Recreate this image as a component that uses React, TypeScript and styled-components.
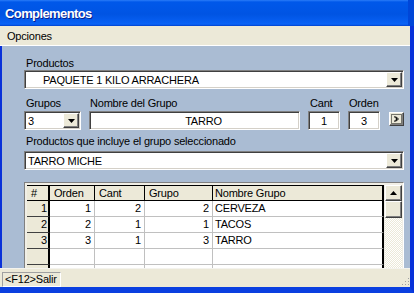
import { FC } from 'react';
import styled, { createGlobalStyle, css } from 'styled-components';

interface IRow {
  id: number;
  orden: number;
  cant: number;
  grupo: number;
  nombre: string;
}

const rows: IRow[] = [
  { id: 1, orden: 1, cant: 2, grupo: 2, nombre: 'CERVEZA' },
  { id: 2, orden: 2, cant: 1, grupo: 1, nombre: 'TACOS' },
  { id: 3, orden: 3, cant: 1, grupo: 3, nombre: 'TARRO' },
];

const headers = ['#', 'Orden', 'Cant', 'Grupo', 'Nombre Grupo'];

const DownArrow: FC = () => (
  <svg width="7" height="4" viewBox="0 0 7 4">
    <path d="M0 0h7L3.5 4z" fill="#000" />
  </svg>
);

const UpArrow: FC = () => (
  <svg width="7" height="4" viewBox="0 0 7 4">
    <path d="M0 4h7L3.5 0z" fill="#000" />
  </svg>
);

const Combo: FC<{ value: string; indent?: number; top?: number }> = ({ value, indent = 0, top = 0 }) => (
  <ComboBox $top={top}>
    <ComboText $indent={indent}>{value}</ComboText>
    <DropButton>
      <DownArrow />
    </DropButton>
  </ComboBox>
);

const App: FC = () => {
  return (
    <Window>
      <GlobalStyle />
      <TitleBar>Complementos</TitleBar>
      <Frame>
        <MenuBar>Opciones</MenuBar>
        <Panel>
          <Label>Productos</Label>
          <Combo value="PAQUETE 1 KILO ARRACHERA" indent={15} />

          <GroupRow>
            <Label>Grupos</Label>
            <Label $pad={1}>Nombre del Grupo</Label>
            <Label>Cant</Label>
            <Label $pad={1}>Orden</Label>
            <span />
            <ComboBox>
              <ComboText>3</ComboText>
              <DropButton>
                <DownArrow />
              </DropButton>
            </ComboBox>
            <TextBox $indent={20}>TARRO</TextBox>
            <TextBox>1</TextBox>
            <TextBox>3</TextBox>
            <IconButton>
              <svg width="11" height="10" viewBox="0 0 11 10">
                <rect x="0.5" y="0.5" width="10" height="9" fill="none" stroke="#000" strokeDasharray="1 1" />
                <path d="M3 2.5l3 2.5-3 2.5M4.5 2.5l3 2.5-3 2.5" fill="none" stroke="#000" />
              </svg>
            </IconButton>
          </GroupRow>

          <Label $top={5}>Productos que incluye el grupo seleccionado</Label>
          <Combo value="TARRO MICHE" top={3} />

          <GridFrame>
            <Table>
              {headers.map((h, i) => (
                <HeadCell key={h} $first={i === 0} $last={i === headers.length - 1}>
                  {h}
                </HeadCell>
              ))}
              {rows.map((r) => (
                <Row key={r.id}>
                  <RowHead>{r.id}</RowHead>
                  <Cell>{r.orden}</Cell>
                  <Cell>{r.cant}</Cell>
                  <Cell>{r.grupo}</Cell>
                  <Cell $left $last>
                    {r.nombre}
                  </Cell>
                </Row>
              ))}
              {[0, 1].map((n) => (
                <Row key={`e${n}`}>
                  <RowHead />
                  <Cell />
                  <Cell />
                  <Cell />
                  <Cell $last />
                </Row>
              ))}
            </Table>
            <ScrollBar>
              <ScrollButton>
                <UpArrow />
              </ScrollButton>
              <Thumb />
            </ScrollBar>
          </GridFrame>
        </Panel>
        <StatusBar>
          <StatusField>&lt;F12&gt;Salir</StatusField>
          <Grip width="10" height="10" viewBox="0 0 10 10">
            <path d="M8 2h1v1H8zM8 5h1v1H8zM5 5h1v1H5zM8 8h1v1H8zM5 8h1v1H5zM2 8h1v1H2z" fill="#a0a0a0" />
          </Grip>
        </StatusBar>
      </Frame>
    </Window>
  );
};

export default App;

const GlobalStyle = createGlobalStyle`
  html, body {
    margin: 0;
    padding: 0;
    width: 414px;
    height: 293px;
    overflow: hidden;
  }

  body {
    font-family: "Liberation Sans", Arial, sans-serif;
    font-size: 11px;
    letter-spacing: -0.2px;
    color: #000;
  }

  * {
    box-sizing: border-box;
  }
`;

const sunken = css`
  border: 1px solid;
  border-color: #808080 #ffffff #ffffff #808080;
  box-shadow: inset 1px 1px 0 #404040, inset -1px -1px 0 #d4d0c8;
`;

const raised = css`
  background: #ece9d8;
  border: 1px solid;
  border-color: #ffffff #404040 #404040 #ffffff;
  box-shadow: inset -1px -1px 0 #808080;
`;

const Window = styled.div`
  width: 414px;
  height: 293px;
  display: flex;
  flex-direction: column;
  background: #0831d9;
`;

const TitleBar = styled.div`
  flex: none;
  height: 26px;
  display: flex;
  align-items: center;
  padding: 1px 0 0 5px;
  background: linear-gradient(#2a7cf8 0, #0058ea 2px, #0054e3 55%, #075ff2 85%, #0a63f6 93%, #0040cc 100%);
  border-right: 6px solid #0046d8;
  color: #fff;
  font-weight: bold;
  font-size: 13px;
  letter-spacing: -0.6px;
  text-shadow: 1px 1px 0 #0a1f8c;
`;

const Frame = styled.div`
  flex: 1;
  min-height: 0;
  display: flex;
  flex-direction: column;
  border-right: 4px solid #0831d9;
  border-bottom: 6px solid #0a3fe0;
  box-shadow: 0 1px 0 #0831d9;
`;

const MenuBar = styled.div`
  flex: none;
  height: 20px;
  display: flex;
  align-items: center;
  padding-left: 7px;
  background: #ece9d8;
  border-bottom: 1px solid #ffffff;
`;

const Panel = styled.div`
  flex: 1;
  min-height: 0;
  overflow: hidden;
  padding: 11px 6px 0 22px;
  background: #aabcd3;
  border-left: 2px solid #0831d9;
`;

const Label = styled.div<{ $top?: number; $pad?: number }>`
  margin-top: ${({ $top = 0 }) => $top}px;
  padding-left: ${({ $pad = 2 }) => $pad}px;
  line-height: 13px;
  white-space: nowrap;
`;

const ComboBox = styled.div<{ $top?: number }>`
  ${sunken};
  margin-top: ${({ $top = 0 }) => $top}px;
  height: 19px;
  display: flex;
  align-items: center;
  padding: 1px;
  background: #ffffff;
`;

const ComboText = styled.span<{ $indent?: number }>`
  flex: 1;
  padding-left: ${({ $indent = 0 }) => 2 + $indent}px;
  white-space: nowrap;
  overflow: hidden;
`;

const DropButton = styled.div`
  ${raised};
  flex: none;
  width: 16px;
  height: 15px;
  display: flex;
  align-items: center;
  justify-content: center;
`;

const GroupRow = styled.div`
  display: grid;
  grid-template-columns: 57px 211px 32px 32px 16px;
  column-gap: 8px;
  row-gap: 1px;
  margin-top: 8px;
  align-items: start;
`;

const TextBox = styled.div<{ $indent?: number }>`
  ${sunken};
  height: 19px;
  display: flex;
  align-items: center;
  justify-content: center;
  padding: 0 2px 0 ${({ $indent = 2 }) => $indent}px;
  background: #ffffff;
`;

const IconButton = styled.div`
  ${raised};
  justify-self: end;
  width: 15px;
  height: 14px;
  margin-top: 1px;
  display: flex;
  align-items: center;
  justify-content: center;
`;

const GridFrame = styled.div`
  margin-top: 12px;
  display: flex;
  align-items: flex-start;
  padding: 2px 1px 0 2px;
  border: 1px solid;
  border-color: #808080 #ffffff #ffffff #808080;
  background: #f1efe6;
`;

const Table = styled.div`
  width: 357px;
  display: grid;
  grid-template-columns: 23px 45px 50px 68px 171px;
  grid-template-rows: 15px;
  grid-auto-rows: 16px;
  border-top: 1px solid #000;
`;

const Row = styled.div`
  display: contents;
`;

const HeadCell = styled.div<{ $first?: boolean; $last?: boolean }>`
  padding-left: ${({ $last }) => ($last ? 2 : 4)}px;
  line-height: 14px;
  background: #ece9d8;
  border-right: ${({ $first, $last }) => ($first || $last ? 2 : 1)}px solid #000;
  border-bottom: 1px solid #000;
  white-space: nowrap;
`;

const RowHead = styled.div`
  padding-right: 1px;
  line-height: 15px;
  text-align: right;
  background: #ece9d8;
  border-right: 2px solid #000;
  border-bottom: 1px solid #404040;
`;

const Cell = styled.div<{ $left?: boolean; $last?: boolean }>`
  padding: 0 3px 0 2px;
  line-height: 15px;
  text-align: ${({ $left }) => ($left ? 'left' : 'right')};
  background: #ffffff;
  border-right: ${({ $last }) => ($last ? '2px solid #000' : '1px solid #c0c0c0')};
  border-bottom: 1px solid #c0c0c0;
  white-space: nowrap;
`;

const ScrollBar = styled.div`
  width: 17px;
  height: 100px;
  margin-left: 1px;
  display: flex;
  flex-direction: column;
  background: repeating-conic-gradient(#ece9d8 0 25%, #ffffff 0 50%) 0 0 / 2px 2px;
`;

const ScrollButton = styled.div`
  ${raised};
  height: 16px;
  display: flex;
  align-items: center;
  justify-content: center;
`;

const Thumb = styled.div`
  ${raised};
  height: 17px;
`;

const StatusBar = styled.div`
  flex: none;
  height: 19px;
  display: flex;
  align-items: flex-end;
  justify-content: space-between;
  padding-left: 2px;
  background: #ece9d8;
  border-top: 1px solid #f4f3ee;
`;

const StatusField = styled.div`
  height: 15px;
  padding: 0 3px 0 2px;
  line-height: 13px;
  border: 1px solid;
  border-color: #a0a0a0 #ffffff #ffffff #a0a0a0;
`;

const Grip = styled.svg`
  display: block;
  margin-bottom: 1px;
`;
